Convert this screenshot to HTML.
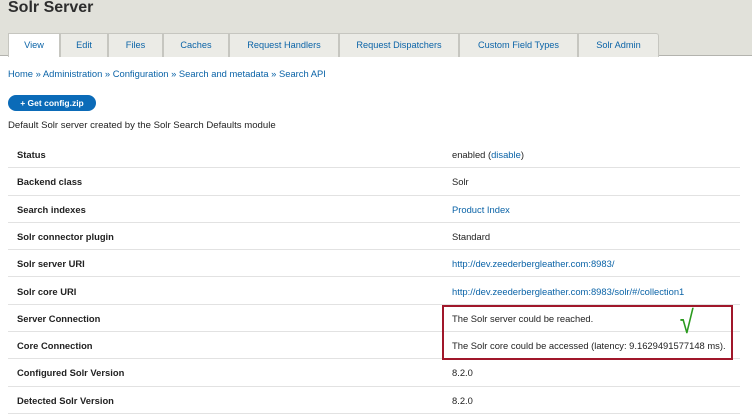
<!DOCTYPE html>
<html><head><style>
*{margin:0;padding:0;box-sizing:border-box}
body{width:752px;height:417px;overflow:hidden;background:#fff;font-family:"Liberation Sans",sans-serif;font-size:9px;color:#222;position:relative}
.hdr{position:absolute;left:0;top:0;width:752px;height:56px;background:#e1e1da;border-bottom:1px solid #b3b3ae}
h1{position:absolute;left:8px;top:-1px;font-size:16px;font-weight:bold;color:#2d2d2d}
.tab{position:absolute;top:33px;height:24px;background:#ebebe6;border:1px solid #c6c6c0;border-bottom:none;color:#0a63a7;text-align:center;line-height:23px;font-size:9.2px}
.tab.a{background:#fff;height:24px}
.bc{position:absolute;left:8px;top:68px;color:#0a63a7;font-size:9.4px}
.btn{position:absolute;left:8px;top:95px;width:88px;height:16px;border-radius:8px;background:#0b6bb8;color:#fff;font-weight:bold;font-size:8.5px;line-height:16px;text-align:center}
.desc{position:absolute;left:8px;top:120px;font-size:9.6px}
.row{position:absolute;left:8px;width:732px;height:27.3px;border-bottom:1px solid #e2e2e2;font-size:9.4px;line-height:27px}
.row b{position:absolute;left:9px}
.row span{position:absolute;left:444px}
a{color:#0a63a7;text-decoration:none}
.box{position:absolute;left:442px;top:305px;width:291px;height:55px;border:2px solid #a0172a}
.chk{position:absolute;left:678px;top:304px;color:#2a9a1e;font-size:32px;line-height:36px;transform:scaleX(0.8)}
</style></head><body>
<div class="hdr"><h1>Solr Server</h1>
<div class="tab a" style="left:8px;width:52px">View</div>
<div class="tab" style="left:60px;width:48px">Edit</div>
<div class="tab" style="left:108px;width:55px">Files</div>
<div class="tab" style="left:163px;width:66px">Caches</div>
<div class="tab" style="left:229px;width:110px">Request Handlers</div>
<div class="tab" style="left:339px;width:120px">Request Dispatchers</div>
<div class="tab" style="left:459px;width:119px">Custom Field Types</div>
<div class="tab" style="left:578px;width:81px;border-radius:0 3px 0 0">Solr Admin</div>
</div>
<div class="bc">Home » Administration » Configuration » Search and metadata » Search API</div>
<div class="btn">+ Get config.zip</div>
<div class="desc">Default Solr server created by the Solr Search Defaults module</div>
<div class="row" style="top:141px"><b>Status</b><span>enabled (<a>disable</a>)</span></div>
<div class="row" style="top:168.3px"><b>Backend class</b><span>Solr</span></div>
<div class="row" style="top:195.6px"><b>Search indexes</b><span><a>Product Index</a></span></div>
<div class="row" style="top:222.9px"><b>Solr connector plugin</b><span>Standard</span></div>
<div class="row" style="top:250.2px"><b>Solr server URI</b><span><a>http://dev.zeederbergleather.com:8983/</a></span></div>
<div class="row" style="top:277.5px"><b>Solr core URI</b><span><a>http://dev.zeederbergleather.com:8983/solr/#/collection1</a></span></div>
<div class="row" style="top:304.8px"><b>Server Connection</b><span>The Solr server could be reached.</span></div>
<div class="row" style="top:332.1px"><b>Core Connection</b><span>The Solr core could be accessed (latency: 9.1629491577148 ms).</span></div>
<div class="row" style="top:359.4px"><b>Configured Solr Version</b><span>8.2.0</span></div>
<div class="row" style="top:386.7px"><b>Detected Solr Version</b><span>8.2.0</span></div>
<div class="box"></div>
<div class="chk">√</div>
</body></html>
